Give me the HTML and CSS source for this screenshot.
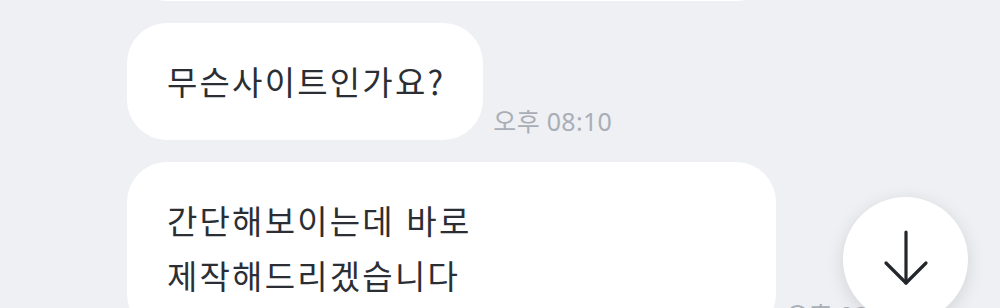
FILE: index.html
```html
<!DOCTYPE html>
<html lang="ko">
<head>
<meta charset="utf-8">
<link rel="stylesheet" href="styles.css">
</head>
<body>
<main class="chat">
  <div class="row first">
    <div class="bubble wide placeholder" aria-hidden="true"></div>
  </div>
  <div class="row">
    <div class="bubble">무슨사이트인가요?</div>
    <span class="time">오후 08:10</span>
  </div>
  <div class="row">
    <div class="bubble wide">간단해보이는데 바로<br>제작해드리겠습니다</div>
    <span class="time">오후 08:10</span>
  </div>
</main>
<button class="scroll-down" aria-label="아래로">
  <svg width="48" height="60" viewBox="0 0 48 60" fill="none" stroke="#23262b" stroke-width="3.2" stroke-linecap="round" stroke-linejoin="round">
    <path d="M24 4 V55"/>
    <path d="M4 35 L24 55 L44 35"/>
  </svg>
</button>
</body>
</html>
```
FILE: styles.css
```css
* { box-sizing: border-box; }
html, body {
  margin: 0;
  padding: 0;
  height: 100%;
  overflow: hidden;
}
body {
  background: #eef0f4;
  font-family: "Noto Sans CJK KR", "Noto Sans", sans-serif;
}
.chat {
  display: flex;
  flex-direction: column;
  gap: 22px;
  padding-left: 127px;
}
.row {
  display: flex;
  align-items: flex-end;
  gap: 10px;
}
.row.first {
  margin-top: -116px;
}
.bubble {
  background: #ffffff;
  border-radius: 40px;
  padding: 31px 38px 31px 40px;
  font-size: 33px;
  line-height: 55px;
  color: #2b2f35;
  letter-spacing: 2.2px;
  white-space: nowrap;
}
.bubble.wide {
  width: 649px;
}
.bubble.placeholder {
  height: 117px;
}
.time {
  font-family: "Noto Sans", "Noto Sans CJK KR", sans-serif;
  font-size: 25px;
  line-height: 25px;
  color: #a9aeb6;
  margin-bottom: 6px;
  letter-spacing: 0.3px;
  white-space: nowrap;
}
.scroll-down {
  position: absolute;
  left: 843px;
  top: 197px;
  width: 125px;
  height: 125px;
  border-radius: 50%;
  border: none;
  background: #ffffff;
  box-shadow: 0 4px 18px rgba(0, 0, 0, 0.12);
  display: flex;
  align-items: center;
  justify-content: center;
  padding: 0;
}
.scroll-down svg {
  display: block;
  margin-top: -4px;
}
```
